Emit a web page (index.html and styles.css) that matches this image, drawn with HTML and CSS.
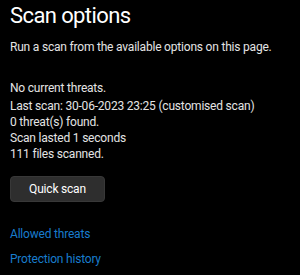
FILE: index.html
```html
<!DOCTYPE html>
<html lang="en">
<head>
    <meta charset="UTF-8">
    <title>Scan options</title>
    <link rel="stylesheet" href="styles.css">
</head>
<body>
    <div class="page">
        <h1 class="title">Scan options</h1>
        <p class="subtitle">Run a scan from the available options on this page.</p>

        <div class="status">
            <p class="status-head">No current threats.</p>
            <p>Last scan: 30-06-2023 23:25 (customised scan)</p>
            <p>0 threat(s) found.</p>
            <p>Scan lasted 1 seconds</p>
            <p>111 files scanned.</p>
        </div>

        <button class="btn">Quick scan</button>

        <div class="links">
            <a class="link" href="#">Allowed threats</a>
            <a class="link" href="#">Protection history</a>
        </div>
    </div>
</body>
</html>
```

FILE: styles.css
```css
* {
    margin: 0;
    padding: 0;
    box-sizing: border-box;
}

body {
    background: #000;
    color: #e4e4e4;
    font-family: 'Roboto', 'Noto Sans', sans-serif;
    font-size: 12px;
    line-height: 16px;
    letter-spacing: -0.2px;
}

.page {
    padding: 0 10px;
}

.title {
    font-size: 22px;
    font-weight: 400;
    line-height: 31px;
    letter-spacing: -0.6px;
    color: #fff;
}

.subtitle {
    margin-top: 8px;
}

.status {
    margin-top: 25px;
}

.status-head {
    margin-bottom: 2px;
}

.btn {
    display: block;
    margin-top: 14px;
    width: 95px;
    height: 26px;
    background: #2e2e2e;
    color: #fff;
    border: 1px solid #383838;
    border-radius: 4px;
    font-family: inherit;
    font-size: 12px;
    letter-spacing: inherit;
}

.links {
    margin-top: 24px;
    display: flex;
    flex-direction: column;
    align-items: flex-start;
    gap: 9px;
}

.link {
    color: #187ccd;
    text-decoration: none;
}
```
